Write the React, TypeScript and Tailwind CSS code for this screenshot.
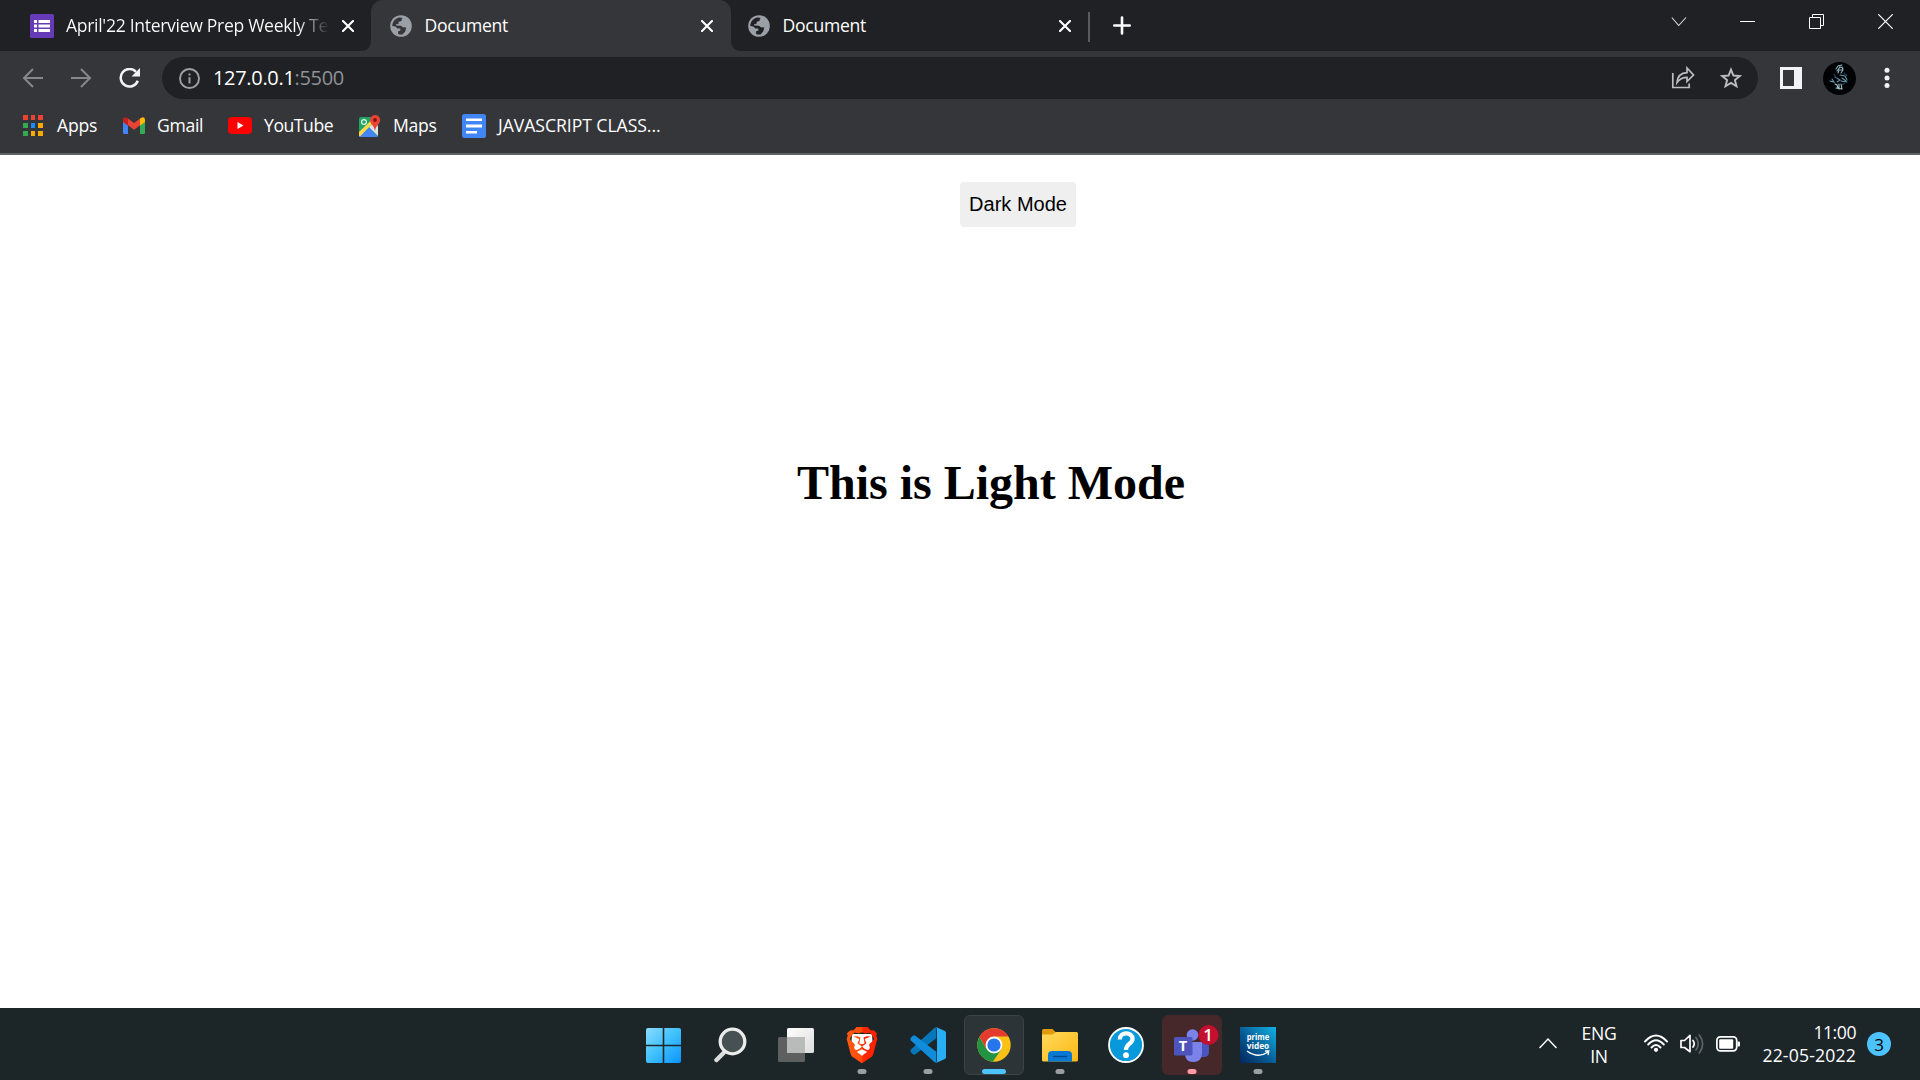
import React from "react";
import { SiBrave } from "react-icons/si";

const UI = "font-['Open_Sans','Noto_Sans',sans-serif]";

function Globe({ bg }: { bg: string }) {
  return (
    <svg className="block shrink-0" width="22" height="22" viewBox="0 0 22 22">
      <circle cx="11" cy="11" r="10.8" fill="#9aa0a6" />
      <path
        d="M2.3 10.9C2.3 6.6 5.6 3 9.6 2.4L13 2.9 11.8 4.3 11.6 6 8.7 6.8 8.4 9 5.8 9.3 6.3 10.6 11 10.7 12.8 12.3 16.3 12.6 15.2 16.4 12.5 19.5 9 19.5 8 18.4 8.2 16.2 10.5 15.4 10.2 13.6 7.5 13.5 5.4 11.6Z"
        fill={bg}
      />
      <path d="M13 2.7L11.8 4.5 12 6.6 15.1 7 15.8 9 19 9.3C18.4 6 16 3.5 13 2.7Z" fill="#9aa0a6" />
    </svg>
  );
}

function TabClose() {
  return (
    <svg className="block shrink-0" width="12" height="12" viewBox="0 0 12 12" stroke="#fff" strokeWidth="2.1" strokeLinecap="round">
      <path d="M1 1L11 11M11 1L1 11" />
    </svg>
  );
}

function TabStrip() {
  return (
    <div className="flex h-[51px] w-full shrink-0 bg-[#202124] text-white">
      <div className="flex w-[371px] shrink-0 items-center pl-[30px]">
        <svg className="block shrink-0" width="24" height="24" viewBox="0 0 24 24">
          <rect width="24" height="24" rx="1.5" fill="#673ab7" />
          <path d="M4 6h3v3H4zM8.500 6H20v3H8.500zM4 10.500h3v3H4zM8.500 10.500H20v3H8.500zM4 15h3v3H4zM8.500 15H20v3H8.500z" fill="#fff" />
        </svg>
        <div className="ml-[12px] w-[263px] overflow-hidden bg-gradient-to-r from-white from-88% to-transparent bg-clip-text text-[17.6px] tracking-[-0.32px] whitespace-nowrap text-transparent">
          April'22 Interview Prep Weekly Te
        </div>
        <div className="ml-[13px]"><TabClose /></div>
      </div>
      <div className="relative flex w-[360px] shrink-0 items-center rounded-t-[12px] bg-[#35363a] pl-[19px]">
        <svg className="absolute bottom-0 left-[-9px]" width="9" height="9" viewBox="0 0 9 9"><path d="M9 0V9H0A9 9 0 0 0 9 0Z" fill="#35363a" /></svg>
        <svg className="absolute right-[-9px] bottom-0" width="9" height="9" viewBox="0 0 9 9"><path d="M0 0V9H9A9 9 0 0 1 0 0Z" fill="#35363a" /></svg>
        <Globe bg="#35363a" />
        <div className="ml-[12.5px] w-[276px] text-[17.6px] tracking-[-0.28px]">Document</div>
        <TabClose />
      </div>
      <div className="flex w-[357px] shrink-0 items-center pl-[17px]">
        <Globe bg="#202124" />
        <div className="ml-[12.5px] w-[276.5px] text-[17.6px] tracking-[-0.28px]">Document</div>
        <TabClose />
      </div>
      <div className="mt-[12px] h-[30px] w-[2px] bg-[#5a5b5e]" />
      <svg className="mt-[16px] ml-[23px] block" width="18" height="19" viewBox="0 0 18 19" stroke="#fff" strokeWidth="2.6" strokeLinecap="round">
        <path d="M1.300 9.500H16.700M9 1.500V17.500" />
      </svg>
      <svg className="mt-[16px] ml-auto block" width="16" height="11" viewBox="0 0 16 11" fill="none" stroke="#ddd" strokeWidth="1.1"><path d="M0.800 1.500L7.700 9.500L15 1.500" /></svg>
      <div className="mt-[21px] ml-[53px] h-px w-[15px] bg-white" />
      <svg className="mt-[14px] ml-[54px] block" width="15" height="15" viewBox="0 0 15 15" fill="none" stroke="#fff"><path d="M.5 3.500H11.500V14.500H.500ZM3.500 3.500V.500H14.500V11.500H11.500" /></svg>
      <svg className="mt-[14px] mr-[27px] ml-[54px] block" width="15" height="15" viewBox="0 0 15 15" stroke="#fff" strokeWidth="1.2"><path d="M.3.300L14.700 14.700M14.700.300L.300 14.700" /></svg>
    </div>
  );
}

function Toolbar() {
  return (
    <div className="flex h-[54px] w-full shrink-0 items-center bg-[#35363a] pl-[22px]">
      <svg className="block shrink-0" width="22" height="20" viewBox="0 0 22 20" fill="none" stroke="#85878a" strokeWidth="2"><path d="M21 10H2.500M11 1L2 10L11 19" /></svg>
      <svg className="ml-[27px] block shrink-0" width="22" height="20" viewBox="0 0 22 20" fill="none" stroke="#85878a" strokeWidth="2"><path d="M0 10H18.500M10 1L19 10L10 19" /></svg>
      <svg className="ml-[25.500px] block shrink-0" width="22" height="20" viewBox="0 0 22 20">
        <path d="M17 3.800A8.800 8.800 0 1 0 18.800 12.800" fill="none" stroke="#f1f3f4" strokeWidth="2.5" />
        <path d="M21 0V8.500H12.500Z" fill="#f1f3f4" />
      </svg>
      <div className="ml-[21.500px] flex h-[42px] w-[1596px] shrink-0 items-center rounded-full bg-[#202124] pl-[17px]">
        <svg className="block shrink-0" width="21" height="21" viewBox="0 0 21 21"><circle cx="10.500" cy="10.500" r="9.500" fill="none" stroke="#9aa0a6" strokeWidth="1.900" /><path d="M9.500 5.500h2v2h-2zM9.500 9.300h2v6.200h-2z" fill="#9aa0a6" /></svg>
        <div className="ml-[13px] text-[20px] tracking-[-0.320px] whitespace-nowrap text-white">127.0.0.1<span className="text-[#8f9296]">:5500</span></div>
        <svg className="ml-auto block shrink-0" width="24" height="24" viewBox="0 0 24 24" fill="none" stroke="#bdbdbd" strokeWidth="1.700"><path d="M1.800 7V21.500H18.200V17.500" /><path d="M6 16.500C6.500 10.500 9.500 7 16 6.700V2L22.500 9L16 15.500V11.300C11.500 11.300 8.500 12.800 6 16.500Z" /></svg>
        <svg className="mr-[16px] ml-[25px] block shrink-0" width="22" height="22" viewBox="0 0 22 22" fill="none" stroke="#bdbdbd" strokeWidth="1.900"><path d="M11 2.600L13.400 8.500L19.800 9L14.900 13.100L16.500 19.300L11 15.900L5.500 19.300L7.100 13.100L2.200 9L8.600 8.500Z" /></svg>
      </div>
      <svg className="ml-[22px] block shrink-0" width="22" height="22" viewBox="0 0 22 22"><path fillRule="evenodd" d="M0 0H22V22H0ZM3 3V19H14V3Z" fill="#f1f3f4" /></svg>
      <svg className="ml-[21px] block shrink-0" width="33" height="33" viewBox="0 0 33 33">
        <circle cx="16.500" cy="16.500" r="16.500" fill="#010203" />
        <g stroke="#8eb0bd" strokeWidth="1.100" fill="none" strokeLinecap="round">
          <path d="M13 7l2-3 4-1M14 9l3-4 3 1M15 11l1-3 4 0M19 5l1 3-2 3" />
          <path d="M17 13l5 1 2 4M19 16l4 3M12 15l5 3-3 2M9 17l2 3-4-1M18 19l6 1" stroke="#6896ad" />
          <path d="M12 22l2 1 1 3M16 22l0 5M18 22l1 5M13 26l6 1" stroke="#a9cbd2" />
        </g>
        <path d="M21 11l3 3M11 12l3 5M22 21l-3 2" stroke="#27425e" strokeWidth="1.300" />
      </svg>
      <svg className="ml-[28px] block shrink-0" width="6" height="22" viewBox="0 0 6 22" fill="#f1f3f4"><circle cx="3" cy="3.300" r="2.500" /><circle cx="3" cy="11" r="2.500" /><circle cx="3" cy="18.500" r="2.500" /></svg>
    </div>
  );
}

const APP_DOTS = ["#ea4335", "#ea4335", "#ea4335", "#34a853", "#1a8cff", "#f9ab00", "#34a853", "#f9ab00", "#f9ab00"];

function Bookmarks() {
  return (
    <div className="flex h-[50px] w-full shrink-0 items-center border-b-2 border-[#606164] bg-[#35363a] pb-[7px] pl-[23px] text-[17.600px] whitespace-nowrap text-white">
      <div className="grid w-[20px] shrink-0 grid-cols-3 gap-[3px]">
        {APP_DOTS.map((c, i) => (
          <div key={i} className="h-[5px]" style={{ background: c }} />
        ))}
      </div>
      <div className="ml-[14px] w-[66px] tracking-[-0.200px]">Apps</div>
      <svg className="block shrink-0" width="22" height="17" viewBox="0 0 22 17">
        <path d="M0 4V15.500Q0 17 1.500 17H5V8Z" fill="#4285f4" />
        <path d="M22 4V15.500Q22 17 20.500 17H17V8Z" fill="#34a853" />
        <path d="M17 1.500L19 .4Q22 0 22 2.800V5L17 8.800Z" fill="#fbbc04" />
        <path d="M5 1.500L3 .4Q0 0 0 2.800V5L5 8.800Z" fill="#c5221f" />
        <path d="M5 1.500L11 6L17 1.500V8.300L11 12.800L5 8.300Z" fill="#ea4335" />
      </svg>
      <div className="ml-[12px] w-[71px] tracking-[-0.300px]">Gmail</div>
      <svg className="block shrink-0" width="24" height="17" viewBox="0 0 24 17"><rect width="24" height="17" rx="4" fill="#f00" /><path d="M9.500 5L15.500 8.500L9.500 12Z" fill="#fff" /></svg>
      <div className="ml-[12px] w-[95px] tracking-[-0.450px]">YouTube</div>
      <svg className="block shrink-0" width="22" height="22" viewBox="0 0 22 22">
        <path d="M0 4Q0 2 2 2H15L19 9V20Q19 22 17 22H2Q0 22 0 20Z" fill="#1fa463" />
        <path d="M0 22L10 12L19 22Z" fill="#4285f4" />
        <path d="M10 12L16 7L19 11V21Z" fill="#dfe1e5" />
        <path d="M0 17L12 5.500L14 8L1 21.500L0 21Z" fill="#ffd84a" />
        <circle cx="5" cy="7" r="2.400" fill="none" stroke="#e6f4ea" strokeWidth="1.200" />
        <path d="M16 0A5.200 5.200 0 0 0 11 5C11 9 15 10 16 16C17 10 21.200 9 21.200 5A5.200 5.200 0 0 0 16 0Z" fill="#ea4335" />
        <circle cx="16" cy="5" r="1.900" fill="#811411" />
      </svg>
      <div className="ml-[12px] w-[69px] tracking-[-0.300px]">Maps</div>
      <svg className="block shrink-0" width="24" height="24" viewBox="0 0 24 24"><rect width="24" height="24" rx="2.500" fill="#4285f4" /><path d="M4 4.500h16v2.500H4zM4 10.500h16v3H4zM4 17h11v2.500H4z" fill="#fff" /></svg>
      <div className="ml-[12px] tracking-[-0.040px]">JAVASCRIPT CLASS...</div>
    </div>
  );
}

function Cell({ children, tone, bar }: { children: React.ReactNode; tone?: string; bar?: string }) {
  return (
    <div className={"relative flex h-[60px] w-[60px] shrink-0 items-center justify-center rounded-[6px] " + (tone ?? "")}>
      {children}
      {bar && <div className={"absolute bottom-px left-1/2 h-[5px] -translate-x-1/2 rounded-full " + bar} />}
    </div>
  );
}

function Taskbar() {
  return (
    <div className="flex h-[72px] w-full shrink-0 bg-[#1c2528] pt-[7px] pl-[634px] text-white">
      <svg className="absolute" width="0" height="0">
        <defs>
          <linearGradient id="win" x1="0" y1="0" x2="1" y2="1"><stop offset="0" stopColor="#8adcff" /><stop offset=".5" stopColor="#3fc0fb" /><stop offset="1" stopColor="#0a93ff" /></linearGradient>
          <linearGradient id="brave" x1="0" x2="1"><stop offset="0" stopColor="#ff5a10" /><stop offset=".5" stopColor="#ff4a0c" /><stop offset=".52" stopColor="#ff2800" /><stop offset="1" stopColor="#ff2000" /></linearGradient>
          <linearGradient id="folder" x1="0" y1="0" x2="1" y2="1"><stop offset="0" stopColor="#ffda5c" /><stop offset="1" stopColor="#fcb813" /></linearGradient>
          <linearGradient id="prime" x1="0" y1="1" x2="1" y2="0"><stop offset="0" stopColor="#02265c" /><stop offset=".45" stopColor="#085a94" /><stop offset="1" stopColor="#12b3e6" /></linearGradient>
          <linearGradient id="pane" x1="0" y1="0" x2="1" y2="1"><stop offset="0" stopColor="#fff" /><stop offset="1" stopColor="#dcdcdc" /></linearGradient>
        </defs>
      </svg>
      <div className="flex shrink-0 gap-[6px]">
        <Cell>
          <svg className="mr-px" width="35" height="35" viewBox="0 0 35 35"><path d="M2 0H16.700V16.700H0V2Q0 0 2 0ZM18.300 0H33Q35 0 35 2V16.700H18.300ZM0 18.300H16.700V35H2Q0 35 0 33ZM18.300 18.300H35V33Q35 35 33 35H18.300Z" fill="url(#win)" /></svg>
        </Cell>
        <Cell>
          <svg width="34" height="36" viewBox="0 0 34 36"><path d="M10.500 26L3.500 33" stroke="#dcdcdc" strokeWidth="4.500" strokeLinecap="round" /><circle cx="19.500" cy="14.500" r="12.300" fill="#475052" stroke="#ececec" strokeWidth="3.300" /></svg>
        </Cell>
        <Cell>
          <svg width="36" height="34" viewBox="0 0 36 34"><rect x="0" y="9" width="27" height="25" rx="1.500" fill="#5e6060" /><rect x="9" y="0" width="27" height="25" rx="1.500" fill="url(#pane)" /><path d="M9 9H27V25H10.500Q9 25 9 23.500Z" fill="#b9baba" /></svg>
        </Cell>
        <Cell bar="w-[9px] bg-[#9b9fa1]">
          <div className="relative h-[36px] w-[36px]">
            <svg className="absolute inset-0" width="36" height="36" viewBox="0 0 36 36"><path d="M8 7H28L29 22L18 30L7 22Z" fill="#fff" /></svg>
            <SiBrave className="absolute inset-0" size={36} fill="url(#brave)" />
          </div>
        </Cell>
        <Cell bar="w-[9px] bg-[#9b9fa1]">
          <svg width="36" height="36" viewBox="0 0 100 100">
            <path d="M3 62Q-1 66 3 71L8 76Q11 78 15 76L73 31V2Q70 0 66 4Z" fill="#0877b9" />
            <path d="M3 38Q-1 34 3 29L8 24Q11 22 15 24L73 69V98Q70 100 66 96Z" fill="#108cd8" />
            <path d="M72 0L97 11Q100 13 100 16V84Q100 87 97 89L72 100Q75 98 75 94V6Q75 2 72 0Z" fill="#28aef6" />
          </svg>
        </Cell>
        <Cell tone="border border-[#3b4346] bg-[#2c3437]" bar="w-[24px] bg-[#4cc2ff] -mb-px">
          <svg width="34" height="34" viewBox="0 0 34 34">
            <circle cx="17" cy="17" r="16.700" fill="#fbc116" />
            <path d="M17 17L9.600 21.200L2.500 8.700A16.700 16.700 0 0 0 15.800 33.700L24.300 21.200Z" fill="#229342" />
            <path d="M17 8.600H31.500A16.700 16.700 0 0 0 2.500 8.700L9.700 21.200L17 17Z" fill="#e33b2e" />
            <circle cx="17" cy="17" r="8.400" fill="#fff" /><circle cx="17" cy="17" r="6.600" fill="#2675ea" />
          </svg>
        </Cell>
        <Cell bar="w-[9px] bg-[#9b9fa1]">
          <svg width="36" height="34" viewBox="0 0 36 34">
            <path d="M0 2.500Q0 1 1.500 1H10.500L15 5.500L11 9H0Z" fill="#e19b08" />
            <path d="M0 6.500H10.500L14 4H34.500Q36 4 36 5.500V32Q36 33.500 34.500 33.500H1.500Q0 33.500 0 32Z" fill="url(#folder)" />
            <path d="M6 33.500V27Q6 23 10 23H26Q30 23 30 27V33.500Z" fill="#0878d2" /><path d="M11 28.500H25" stroke="#03478d" strokeWidth="1.400" />
          </svg>
        </Cell>
        <Cell>
          <svg width="36" height="36" viewBox="0 0 36 36"><circle cx="18" cy="18" r="17" fill="#0799da" stroke="#fff" strokeWidth="1.800" /><path d="M11.800 12.500C11.800 4.500 24.500 4.500 24.500 12C24.500 17 18 16.500 18 23" fill="none" stroke="#fff" strokeWidth="4.300" /><circle cx="18" cy="28.200" r="2.900" fill="#fff" /></svg>
        </Cell>
        <Cell tone="bg-[#46282a]" bar="w-[9px] bg-[#ff99a4]">
          <svg className="mb-[2px] ml-[8px]" width="46" height="40" viewBox="0 0 46 40">
            <circle cx="19.500" cy="11" r="5.800" fill="#7b83eb" />
            <path d="M27 19H36V28Q36 33 31 33H27Z" fill="#4b53bc" />
            <path d="M12 18H29V29Q29 38 20 38Q12 38 12 29Z" fill="#7b83eb" />
            <rect x="1" y="13" width="18.500" height="18.500" rx="1.500" fill="#4d55bd" />
            <text x="10" y="27.300" textAnchor="middle" fontFamily="Open Sans" fontWeight="700" fontSize="14.500" fill="#fff">T</text>
            <circle cx="35.500" cy="11" r="10" fill="#c50f2e" />
            <text x="35" y="17" textAnchor="middle" fontFamily="Open Sans" fontWeight="600" fontSize="17" fill="#fff">1</text>
          </svg>
        </Cell>
        <Cell bar="w-[9px] bg-[#9b9fa1]">
          <svg width="36" height="36" viewBox="0 0 36 36"><rect width="36" height="36" fill="url(#prime)" /><g fontFamily="Open Sans" fontSize="8" fontWeight="700" fill="#fff" textAnchor="middle"><text x="18" y="13" textLength="22.500" lengthAdjust="spacingAndGlyphs">prime</text><text x="18" y="21.500" textLength="22.500" lengthAdjust="spacingAndGlyphs">video</text></g><path d="M7 24Q18 32 28 25M25 24H28.800L28 28" fill="none" stroke="#fff" strokeWidth="1.300" /></svg>
        </Cell>
      </div>
      <div className={"flex flex-1 " + UI}>
        <svg className="mt-[22px] ml-[251px] block shrink-0" width="18" height="12" viewBox="0 0 18 12" fill="none" stroke="#fff" strokeWidth="1.500"><path d="M.5 11L9 2L17.500 11" /></svg>
        <div className="mt-[7px] ml-[20px] w-[44px] shrink-0 text-center text-[17.600px] leading-[23px] tracking-[-0.300px]">ENG<br />IN</div>
        <svg className="mt-[19px] ml-[23px] block shrink-0" width="24" height="19" viewBox="0 0 24 19" fill="none" stroke="#fff" strokeWidth="1.900" strokeLinecap="round"><path d="M1 7.500Q12-4.500 23 7.500M4.200 10.500Q12 2 19.800 10.500M7.500 13.500Q12 8.500 16.500 13.500" /><circle cx="12" cy="15.800" r="2.100" fill="#fff" stroke="none" /></svg>
        <svg className="mt-[19px] ml-[12px] block shrink-0" width="24" height="20" viewBox="0 0 24 20" fill="none" stroke="#fff" strokeWidth="1.700" strokeLinejoin="round" strokeLinecap="round"><path d="M1 6.500H4.500L10 1.300V17.700L4.500 13.500H1ZM13 6.500Q15.500 9.800 13 13" /><path d="M16 3.500Q20.500 9.800 16 16M19.300 1Q26 9.800 19.300 19" stroke="#5d6467" /></svg>
        <svg className="mt-[21px] ml-[12px] block shrink-0" width="25" height="16" viewBox="0 0 25 16"><rect x=".9" y=".9" width="19.800" height="14" rx="3.300" fill="none" stroke="#fff" strokeWidth="1.700" /><rect x="3.200" y="3.200" width="14" height="9.500" rx="1" fill="#fff" /><path d="M21.500 5.500H23Q24 5.500 24 6.500V9.500Q24 10.500 23 10.500H21.500Z" fill="#fff" /></svg>
        <div className="mt-[6px] ml-[15px] w-[100px] shrink-0 text-right text-[17.600px] leading-[23px] whitespace-nowrap"><span className="tracking-[-0.450px]">11:00</span><br /><span className="tracking-[0.180px]">22-05-2022</span></div>
        <div className="mt-[17px] ml-[11px] flex h-[24px] w-[24px] shrink-0 items-center justify-center rounded-full bg-[#4cc2ff] text-[17px] leading-none text-black">3</div>
      </div>
    </div>
  );
}

export default function App() {
  return (
    <div className={"flex h-[1080px] w-[1920px] flex-col overflow-hidden bg-white " + UI}>
      <TabStrip />
      <Toolbar />
      <Bookmarks />
      <main className="flex min-h-0 flex-1 flex-col items-start bg-white pt-[27px] text-black">
        <button className="ml-[960px] h-[45px] w-[116px] rounded-[4px] bg-[#efefef] pb-px font-['Liberation_Sans',sans-serif] text-[20px] leading-[23px]">Dark Mode</button>
        <h1 className="mt-[228px] ml-[797px] font-['Liberation_Serif',serif] text-[48px] leading-[55px] font-bold whitespace-nowrap">This is Light Mode</h1>
      </main>
      <Taskbar />
    </div>
  );
}
